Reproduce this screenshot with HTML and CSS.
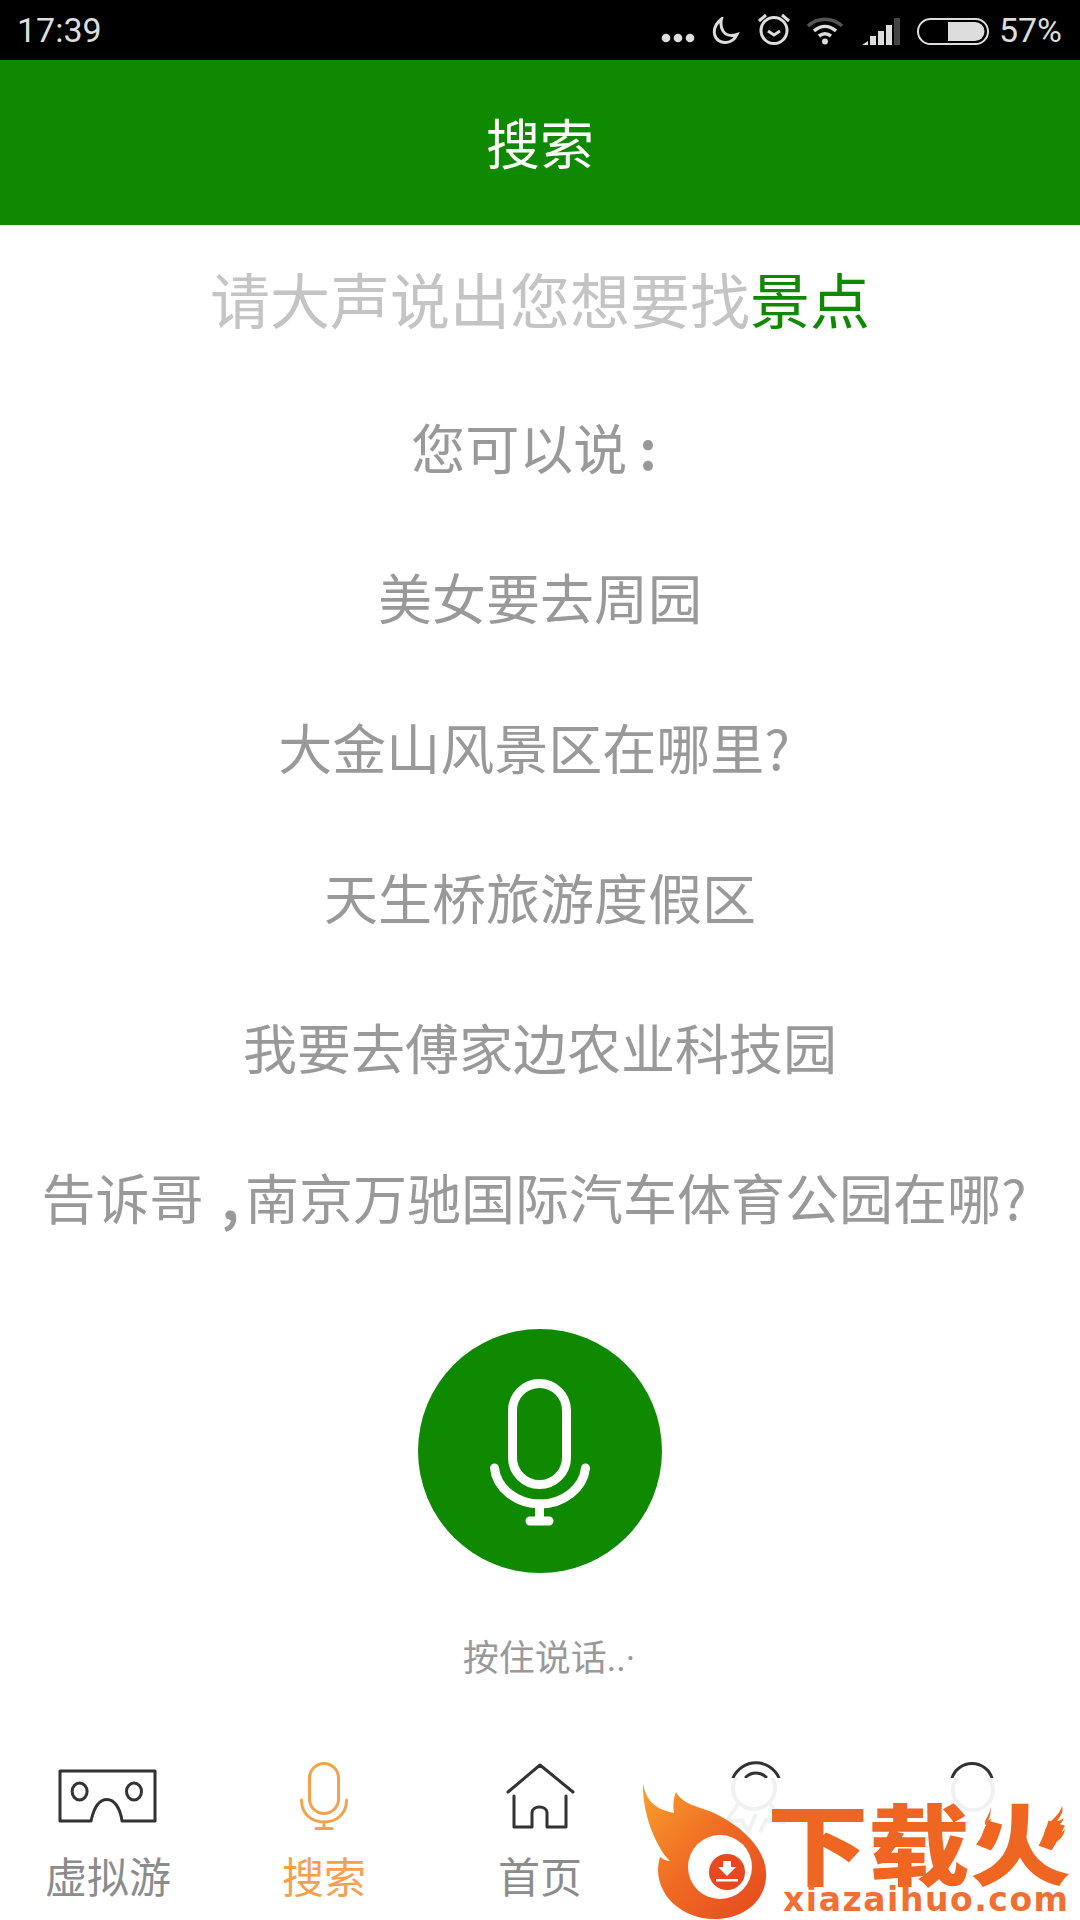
FILE: index.html
```html
<!DOCTYPE html>
<html lang="zh-CN">
<head>
<meta charset="utf-8">
<title>搜索</title>
<link rel="stylesheet" href="styles.css">
</head>
<body>
<div class="app">
  <div class="statusbar">
    <span class="time">17:39</span>
    <div class="status-icons">
      <svg class="ico-dots" width="34" height="10" viewBox="0 0 34 10"><circle cx="5" cy="5" r="4.3"/><circle cx="17" cy="5" r="4.3"/><circle cx="29" cy="5" r="4.3"/></svg>
      <svg class="ico-moon" width="28" height="28" viewBox="0 0 28 28"><path d="M9.5 2C4.5 6 1.5 11 2.5 17c1 5.500 6 9 11.500 8.500 5-.5 9-3.500 11-8-6 2-11.500.5-14-3.500C9 10.500 8.500 6 9.500 2z"/></svg>
      <svg class="ico-alarm" width="34" height="32" viewBox="0 0 34 32"><circle cx="17" cy="17.500" r="13"/><path d="M11 18l6 4 6-4"/><path d="M2 8l7-6M32 8l-7-6"/></svg>
      <svg class="ico-wifi" width="38" height="28" viewBox="0 0 38 28"><path class="dim" d="M2 9c10-9 24-9 34 0"/><path d="M8 14c7-6 15-6 22 0"/><path d="M13 19c4-3 8-3 12 0"/><circle cx="19" cy="24.500" r="3"/></svg>
      <svg class="ico-signal" width="38" height="27" viewBox="0 0 38 27"><path d="M0 27l6-4v4z"/><rect x="8" y="18" width="6" height="9"/><rect x="16" y="13" width="6" height="14"/><rect x="24" y="7" width="6" height="20"/><rect class="dim" x="32" y="0" width="6" height="27"/></svg>
      <svg class="ico-battery" width="72" height="27" viewBox="0 0 72 27"><rect class="shell" x="1" y="1" width="70" height="25" rx="12.500"/><path class="level" d="M31 4h27a9.500 9.500 0 0 1 0 19H31z"/></svg>
      <span class="percent">57%</span>
    </div>
  </div>

  <header class="titlebar">搜索</header>

  <main class="voice">
    <p class="line prompt">请大声说出您想要找<span class="accent">景点</span></p>
    <p class="line">您可以说<span class="colon">:</span></p>
    <p class="line">美女要去周园</p>
    <p class="line">大金山风景区在哪里<span class="ask">?</span></p>
    <p class="line">天生桥旅游度假区</p>
    <p class="line">我要去傅家边农业科技园</p>
    <p class="line">告诉哥<span class="comma">,</span>南京万驰国际汽车体育公园在哪<span class="ask">?</span></p>

    <button class="mic-button" type="button" aria-label="按住说话">
      <svg width="110" height="155" viewBox="0 0 110 155"><rect x="27.500" y="9.500" width="54" height="101" rx="27"/><path d="M9.500 94c2 20 22 36 45.500 36s43.500-16 45.500-36"/><path d="M54.500 130v17M45 147h19"/></svg>
    </button>
    <p class="hold">按住说话<span class="dots">..·</span></p>
  </main>

  <nav class="tabs">
    <div class="tab">
      <svg class="tab-icon" width="100" height="70" viewBox="0 0 100 70"><path d="M2 10H97V60H64C62 46 56 38.500 49 38.500S36 46 33 60H2Z"/><ellipse cx="21.600" cy="30.500" rx="7.500" ry="8.500"/><ellipse cx="76" cy="30.500" rx="7.500" ry="8.500"/></svg>
      <span class="tab-label">虚拟游</span>
    </div>
    <div class="tab tab-active">
      <svg class="tab-icon" width="100" height="70" viewBox="0 0 100 70"><rect x="35.500" y="2.500" width="29" height="50" rx="14.500"/><path d="M27.500 39c0 14 10 22 22.500 22s22.500-8 22.500-22M50 61v6.500M42 67.500h16"/></svg>
      <span class="tab-label">搜索</span>
    </div>
    <div class="tab">
      <svg class="tab-icon" width="100" height="70" viewBox="0 0 100 70"><path d="M18 31L50 4l33 27M24 35v31h18V52c0-8 15-8 15 0v14h19V35"/></svg>
      <span class="tab-label">首页</span>
    </div>
    <div class="tab tab-faded">
      <svg class="tab-icon" width="100" height="70" viewBox="0 0 100 70"><path d="M27 17A25 25 0 0 1 73 17"/><path d="M40 16A14.500 14.500 0 0 1 60 16"/></svg>
    </div>
    <div class="tab tab-faded">
      <svg class="tab-icon" width="100" height="70" viewBox="0 0 100 70"><path d="M30 17A21 21 0 0 1 70 17"/></svg>
    </div>
  </nav>

  <div class="veil">
    <svg class="veil-marks" width="440" height="142" viewBox="0 0 440 142"><circle cx="114" cy="10" r="21"/><path d="M98 26l-12 18 16-2 6 12 8-18M130 26l12 18-16-2-6 12"/><circle cx="333" cy="12" r="20"/></svg>
  </div>

  <svg class="logo" width="440" height="140" viewBox="0 0 440 140">
    <defs>
      <linearGradient id="flame" x1="0" y1="0" x2="1" y2="1"><stop offset="0" stop-color="#f9a02b"/><stop offset=".5" stop-color="#ef6a24"/><stop offset="1" stop-color="#e6481f"/></linearGradient>
    </defs>
    <path class="flame" d="M3 3c3 18 12 26 31 30-1-6-1-14 2-21 8 14 24 14 40 22 30 15 52 38 50 64-2 24-22 40-50 41-32 1-58-22-58-49 0-5 1-9 2-13 3 2 6 4 10 4C18 70 2 36 3 3z"/>
    <circle class="hole" cx="80" cy="87" r="32"/>
    <circle class="badge" cx="87" cy="92" r="18"/>
    <path class="hole-fill" d="M83 81h8v6h5l-9 9-9-9h5zM76 99h22v2.500H76z"/>
    <text class="logo-cn" x="127" y="98" textLength="304" lengthAdjust="spacingAndGlyphs">下载火</text>
    <text class="logo-en" x="143" y="131" textLength="285" lengthAdjust="spacing">xiazaihuo.com</text>
    <path class="flame-solid" d="M350 25c2 8-6 14-5 20 3-3 4-6 6-6-3 10 6 12 4 22-2 8-12 8-13 1-3-12 12-22 8-37zM422 26c2 6-2 11-5 15 3 0 5-2 7-3-2 7-12 10-10 18 4 0 8-3 11-7-1 8-8 15-15 14-8-2-7-12-2-18 5-7 12-11 14-19z"/>
  </svg>
</div>
</body>
</html>
```

FILE: styles.css
```css
* {
  box-sizing: border-box;
  margin: 0;
  padding: 0;
}

html,
body {
  width: 1080px;
  height: 1920px;
  overflow: hidden;
  background: #fff;
}

body {
  font-family: "Noto Sans CJK SC", "Noto Sans", sans-serif;
}

.app {
  position: relative;
  display: flex;
  flex-direction: column;
  width: 1080px;
  height: 1920px;
}

/* Status bar */
.statusbar {
  display: flex;
  flex: none;
  align-items: center;
  justify-content: space-between;
  height: 60px;
  padding: 0 18px 0 17px;
  background: #000;
  color: #ddd;
  font-family: Roboto, sans-serif;
  font-size: 34px;
}

.status-icons {
  display: flex;
  align-items: center;
  height: 60px;
}

.status-icons svg {
  flex: none;
}

.ico-dots {
  margin-top: 16px;
  fill: #ddd;
}

.ico-moon {
  margin-left: 17px;
  margin-top: 2px;
  fill: none;
  stroke: #ddd;
  stroke-width: 3;
}

.ico-alarm {
  margin-left: 17px;
  margin-top: -2px;
  fill: none;
  stroke: #ddd;
  stroke-width: 3;
}

.ico-wifi {
  margin-left: 15px;
  margin-top: 2px;
  fill: none;
  stroke: #ddd;
  stroke-width: 3.500;
}

.ico-wifi circle {
  fill: #ddd;
  stroke: none;
}

.ico-wifi .dim {
  stroke: #555;
}

.ico-signal {
  margin-left: 18px;
  margin-top: 3px;
  fill: #ddd;
}

.ico-signal .dim {
  fill: #444;
}

.ico-battery {
  margin-left: 17px;
  margin-top: 3px;
}

.shell {
  fill: none;
  stroke: #ddd;
  stroke-width: 2;
}

.level {
  fill: #ddd;
}

.percent {
  margin-left: 10px;
  line-height: 1;
}

/* Title */
.titlebar {
  flex: none;
  height: 165px;
  background: #0f8a00;
  color: #fff;
  font-size: 54px;
  line-height: 164px;
  text-align: center;
}

/* Voice prompts */
.voice {
  display: flex;
  flex: 1;
  flex-direction: column;
  align-items: center;
}

.line {
  height: 150px;
  color: #999;
  font-size: 54px;
  line-height: 143px;
  white-space: nowrap;
}

.prompt {
  color: #c4c4c4;
  font-size: 60px;
  line-height: 146px;
}

.accent {
  color: #0f8a00;
}

.colon {
  padding: 0 12px;
  font-weight: 700;
}

.comma {
  padding: 0 6px 0 18px;
  font-weight: 700;
}

.ask {
  padding-right: 12px;
}

.mic-button {
  display: flex;
  flex: none;
  align-items: center;
  justify-content: center;
  width: 244px;
  height: 244px;
  margin-top: 54px;
  border: 0;
  border-radius: 50%;
  background: #0f8a00;
}

.mic-button svg {
  fill: none;
  stroke: #fff;
  stroke-linecap: round;
  stroke-width: 9;
}

.hold {
  margin-top: 57px;
  padding-left: 18px;
  color: #999;
  font-size: 36px;
  line-height: 50px;
}

.dots {
  font-family: Roboto, sans-serif;
}

/* Tabs */
.tabs {
  display: grid;
  flex: none;
  grid-template-columns: repeat(5, 216px);
  height: 180px;
}

.tab {
  display: flex;
  flex-direction: column;
  align-items: center;
  padding-top: 21px;
}

.tab-icon {
  flex: none;
  fill: none;
  stroke: #333;
  stroke-linecap: round;
  stroke-linejoin: round;
  stroke-width: 3;
}

.tab-label {
  margin-top: 16px;
  color: #8c8c8c;
  font-size: 42px;
  line-height: 56px;
}

.tab-active .tab-icon {
  stroke: #f6a04d;
}

.tab-active .tab-label {
  color: #f6a04d;
}

/* Watermark over the last two tabs */
.veil {
  position: absolute;
  left: 640px;
  top: 1778px;
  width: 440px;
  height: 142px;
  background: #fff;
}

.veil-marks {
  fill: none;
  stroke: #f0f1f2;
  stroke-width: 4;
}

.logo {
  position: absolute;
  left: 640px;
  top: 1780px;
}

.flame {
  fill: url(#flame);
}

.hole {
  fill: #fff;
}

.badge {
  fill: #e6481f;
}

.hole-fill {
  fill: #fff;
}

.flame-solid {
  fill: #f2661f;
}

.logo-cn {
  fill: #ef6622;
  font-size: 88px;
  font-weight: 900;
}

.logo-en {
  fill: #f07033;
  font-family: "DejaVu Sans", sans-serif;
  font-size: 33px;
  font-weight: 700;
}
```
